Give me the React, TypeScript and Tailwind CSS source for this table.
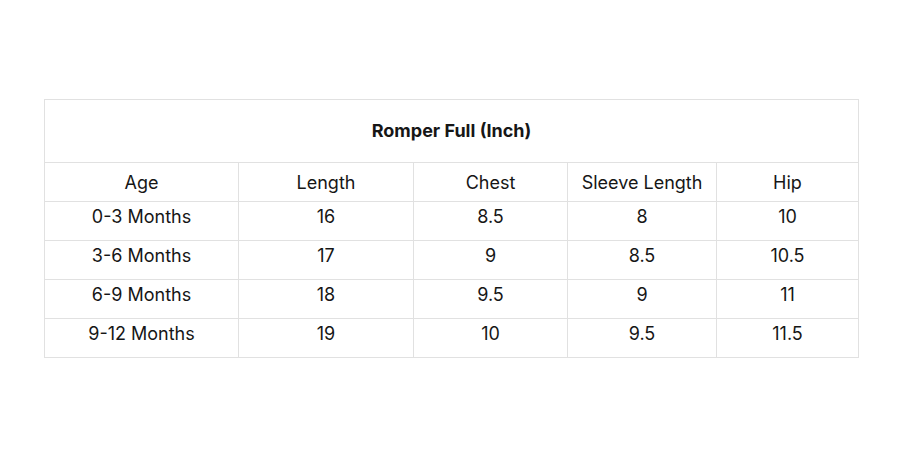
import React from 'react'

const rows = [
	['0-3 Months', '16', '8.5', '8', '10'],
	['3-6 Months', '17', '9', '8.5', '10.5'],
	['6-9 Months', '18', '9.5', '9', '11'],
	['9-12 Months', '19', '10', '9.5', '11.5'],
]

const headers = ['Age', 'Length', 'Chest', 'Sleeve Length', 'Hip']

export default function App() {
	return (
		<div
			className="h-[457px] w-[900px] bg-white pl-[44px] pt-[99px] text-[#161616]"
			style={{ fontFamily: 'Inter, "Noto Sans", sans-serif' }}
		>
			<table className="w-[814px] table-fixed border-collapse">
				<colgroup>
					<col className="w-[194px]" />
					<col className="w-[175px]" />
					<col className="w-[154px]" />
					<col className="w-[149px]" />
					<col className="w-[142px]" />
				</colgroup>
				<thead>
					<tr className="h-[63px]">
						<th colSpan={5} className="border border-[#e1e1e1] p-0 pb-[2px] text-center text-[18px] font-bold">
							Romper Full (Inch)
						</th>
					</tr>
					<tr className="h-[39px]">
						{headers.map((h) => (
							<th key={h} className="border border-[#e1e1e1] p-0 pt-[1px] text-center text-[18px] font-normal">
								{h}
							</th>
						))}
					</tr>
				</thead>
				<tbody>
					{rows.map((r) => (
						<tr key={r[0]} className="h-[39px]">
							{r.map((c, i) => (
								<td key={i} className="border border-[#e1e1e1] p-0 pb-[9px] text-center text-[18px]">
									{c}
								</td>
							))}
						</tr>
					))}
				</tbody>
			</table>
		</div>
	)
}
